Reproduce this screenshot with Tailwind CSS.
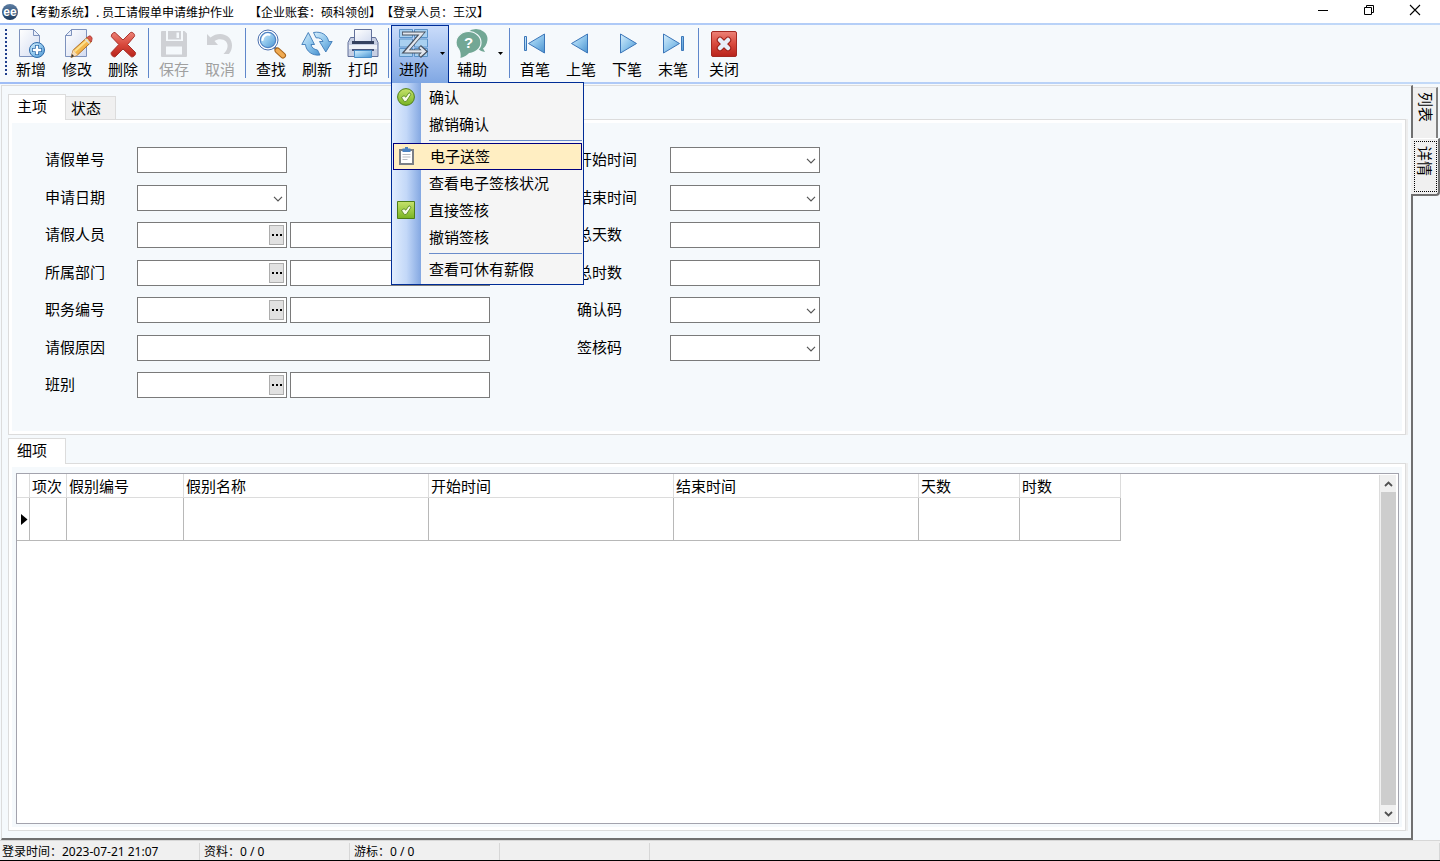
<!DOCTYPE html>
<html lang="zh-CN">
<head>
<meta charset="utf-8">
<title>员工请假单申请维护作业</title>
<script src="https://cdn.jsdelivr.net/npm/@tailwindcss/browser@4"></script>
</head>
<body class="flex h-screen min-h-[600px] flex-col overflow-hidden bg-[#f5f9fc] font-['Noto_Sans_CJK_SC',sans-serif] text-[15px] leading-[18px] text-black">

<!-- Shared gradients and glyphs -->
<svg width="0" height="0" class="absolute" aria-hidden="true">
  <defs>
    <linearGradient id="gBlue" x1="0" y1="0" x2="1" y2="1"><stop offset="0" stop-color="#d8effc"/><stop offset=".5" stop-color="#8fc6ec"/><stop offset="1" stop-color="#4a93d0"/></linearGradient>
    <linearGradient id="gPage" x1="0" y1="0" x2="1" y2="1"><stop offset="0" stop-color="#ffffff"/><stop offset="1" stop-color="#d3dcf0"/></linearGradient>
    <linearGradient id="gRed" x1="0" y1="0" x2="0" y2="1"><stop offset="0" stop-color="#ec8277"/><stop offset=".5" stop-color="#d8493c"/><stop offset="1" stop-color="#b8231b"/></linearGradient>
    <linearGradient id="gGreen" x1="0" y1="0" x2="0" y2="1"><stop offset="0" stop-color="#c6e26c"/><stop offset="1" stop-color="#78b422"/></linearGradient>
    <linearGradient id="gNavy" x1="0" y1="0" x2="0" y2="1"><stop offset="0" stop-color="#5d7ea3"/><stop offset="1" stop-color="#1d3c60"/></linearGradient>
    <symbol id="chev" viewBox="0 0 10 6"><path d="M1 .8 5 4.8 9 .8" fill="none" stroke="#555" stroke-width="1.2"/></symbol>
    <symbol id="drop" viewBox="0 0 5 3"><path d="M0 0h5L2.5 3z" fill="#000"/></symbol>
    <symbol id="dots" viewBox="0 0 10 2"><path d="M0 0h2v2H0zM4 0h2v2H4zM8 0h2v2H8z" fill="#000"/></symbol>
  </defs>
</svg>

<header class="flex h-[23px] shrink-0 items-center bg-white text-xs">
  <svg class="ml-0.5 size-4" viewBox="0 0 16 16" aria-hidden="true">
    <circle cx="8" cy="8" r="8" fill="url(#gNavy)"/>
    <text x="8" y="11.5" text-anchor="middle" font-family="Liberation Sans, sans-serif" font-weight="bold" font-size="12" fill="#fff">ee</text>
  </svg>
  <h1 class="ml-1.5 flex whitespace-nowrap [text-spacing-trim:space-all]"><span>【考勤系统】. 员工请假单申请维护作业</span><span class="ml-[15px]">【企业账套：硕科领创】【登录人员：王汉】</span></h1>
  <div class="ml-auto flex pr-0.5 pb-[3px]">
    <button type="button" aria-label="最小化" class="flex h-5 w-[46px] items-center justify-center"><svg width="12" height="12"><path d="M1 6.500h10" stroke="#000"/></svg></button>
    <button type="button" aria-label="还原" class="flex h-5 w-[45px] items-center justify-center"><svg width="12" height="12" fill="none" stroke="#000"><path d="M1.500 3.500h7v7h-7zM3.500 3.500v-2h7v7h-2"/></svg></button>
    <button type="button" aria-label="关闭窗口" class="flex h-5 w-[47px] items-center justify-center"><svg width="12" height="12"><path d="M1 1l10 10M11 1L1 11" stroke="#000" stroke-width="1.1"/></svg></button>
  </div>
</header>

<div class="h-0.5 shrink-0 bg-linear-to-r from-[#9fbdf6] to-[#c3daf8]"></div>
<nav class="relative z-10 flex h-[57px] shrink-0 whitespace-nowrap pl-[5px]" aria-label="工具栏">
  <div class="mt-1 mr-px h-12 w-0.5 bg-[repeating-linear-gradient(to_bottom,#1f3f8c_0_2px,transparent_2px_4px)]"></div>

  <button type="button" class="flex w-[46px] flex-col items-center pt-[3px]">
    <svg width="32" height="32" viewBox="0 0 32 32"><path d="M4.500 1.500h14l6 6v21h-20z" fill="url(#gPage)" stroke="#7d92bd"/><path d="M18.500 1.500v6h6z" fill="#e9effa" stroke="#7d92bd"/><circle cx="22" cy="22" r="7.500" fill="url(#gBlue)" stroke="#2f6cab"/><path d="M22 17v10M17 22h10" stroke="#2f6cab" stroke-width="4"/><path d="M22 17.800v8.400M17.800 22h8.400" stroke="#fff" stroke-width="2.400"/></svg>
    <span>新增</span></button>
  <button type="button" class="flex w-[46px] flex-col items-center pt-[3px]">
    <svg width="32" height="32" viewBox="0 0 32 32"><path d="M10.500 1.500h15v27h-21v-21z" fill="url(#gPage)" stroke="#7d92bd"/><path d="M10.500 1.500v6h-6z" fill="#e9effa" stroke="#7d92bd"/><path d="M10 29.500l2.200-7.500L26 9.500l4.300 4.500L16.500 27z" fill="#f3b64a" stroke="#a8651c" stroke-width=".9"/><path d="M13 22.500L26.500 10.500l1.500 1.300L14.500 24z" fill="#fbe08f"/><path d="M26 9.500l2-1.500c1.500-.8 3.800 1.800 3 3.500L30.300 14z" fill="#dd5a50" stroke="#a83a32" stroke-width=".8"/><path d="M24.300 11l4.300 4.500" stroke="#d9dde6" stroke-width="1.500"/><path d="M10 29.500l2.200-7.500 4.300 5z" fill="#f5dcb8"/><path d="M10 29.500l1-3.500 2.200 2.300z" fill="#333"/></svg>
    <span>修改</span></button>
  <button type="button" class="flex w-[46px] flex-col items-center pt-[3px]">
    <svg width="32" height="32" viewBox="0 0 32 32"><path d="M8 4.500l8 7.500 7.500-7.500c1.800-1 4.800 1.800 4 3.800L20.500 16.500l8 8c.6 2.200-2 5-4.200 4.300L16 21l-7.800 7.800c-2 .6-4.700-2-4-4.200l7.600-8.100-7.400-7.800C4 6.500 6 4.300 8 4.500z" fill="url(#gRed)" stroke="#a8322b"/></svg>
    <span>删除</span></button>
  <div class="mx-0.5 mt-[3px] h-[50px] w-px bg-[#5f87cb]"></div>

  <button type="button" disabled class="flex w-[46px] flex-col items-center pt-[3px] text-[#a0a0a0]">
    <svg width="32" height="32" viewBox="0 0 32 32"><path fill-rule="evenodd" d="M4 3h4v10h17V3h1.500L29 5.500V28a1 1 0 0 1-1 1H4a1 1 0 0 1-1-1V4a1 1 0 0 1 1-1zm4 15.500V26.500h16v-8z" fill="#cfd1d5"/><path fill-rule="evenodd" d="M10 3h13v8.500H10zm8.500 1.500V10h2.500V4.500z" fill="#cfd1d5"/></svg>
    <span>保存</span></button>
  <button type="button" disabled class="flex w-[46px] flex-col items-center pt-[3px] text-[#a0a0a0]">
    <svg width="32" height="32" viewBox="0 0 32 32"><path d="M3 6l3.500 3.500C12.500 4.500 20.500 5 25 9.500c4 4.500 4 11.500 0 16.500h-5.500c4-3.500 5.500-9 2.500-12.500-3-3-8-3-11.500-.5l3.500 4H3z" fill="#cfd1d5"/></svg>
    <span>取消</span></button>
  <div class="mx-0.5 mt-[3px] h-[50px] w-px bg-[#5f87cb]"></div>

  <button type="button" class="flex w-[46px] flex-col items-center pt-[3px]">
    <svg width="32" height="32" viewBox="0 0 32 32"><path d="M19 19l3.500 3.500" stroke="#6d7f9f" stroke-width="3"/><path d="M22.500 22.500l5.500 5" stroke="#a8651c" stroke-width="6" stroke-linecap="round"/><path d="M22.500 22.500l5.500 5" stroke="#f0ab52" stroke-width="4" stroke-linecap="round"/><circle cx="13" cy="12" r="10" fill="#fff" stroke="#4a6fae"/><circle cx="13" cy="12" r="7.700" fill="url(#gBlue)" stroke="#4f82c4" stroke-width="1.200"/><path d="M7.500 12a5.500 5.500 0 0 1 7-5.300" fill="none" stroke="#fff" stroke-width="2.200" stroke-linecap="round"/></svg>
    <span>查找</span></button>
  <button type="button" class="flex w-[46px] flex-col items-center pt-[3px]">
    <svg width="32" height="32" viewBox="0 0 32 32" fill="url(#gBlue)" stroke="#3d7ab8" stroke-width=".9"><path d="M7.300 4.500L.8 16.500h3.700c.5 6.500 6.500 11.500 14.500 10.500l-2.500-5c-3.500-.5-6-2.500-6.500-5.500h3.500z"/><path d="M24.800 24l6.400-10.500h-3.500C26.500 7 20.500 3 12.500 4.500l2.500 5.300c3.500-.3 6 1.200 7 3.700h-3.500z"/></svg>
    <span>刷新</span></button>
  <button type="button" class="flex w-[46px] flex-col items-center pt-[3px]">
    <svg width="32" height="32" viewBox="0 0 32 32"><path d="M3.500 9.500h25l2.500 5v14H1v-14z" fill="#c7cfe3" stroke="#62719b"/><path d="M7.500 1.500h17v12h-17z" fill="url(#gPage)" stroke="#62719b"/><path d="M5 13h22v3H5z" fill="#34415f"/><path d="M2 17h28v4H2z" fill="#eef1f8"/><path d="M5 21h22v2H5z" fill="#46557c"/><path d="M7.500 22.500h17v7h-17z" fill="url(#gBlue)" stroke="#4a8fc9"/></svg>
    <span>打印</span></button>
  <div class="mx-0.5 mt-[3px] h-[50px] w-px bg-[#5f87cb]"></div>

  <div class="relative w-[58px]">
    <button type="button" aria-haspopup="menu" aria-expanded="true" class="relative z-20 flex h-[58px] w-full border border-b-0 border-[#002d96] bg-linear-to-b from-[#cadcfa] to-[#80a7e3] pt-0.5">
      <span class="flex w-11 flex-col items-center">
        <svg width="32" height="32" viewBox="0 0 32 32"><path d="M1.500 1.500h13v8h-13zM16.500 1.500h13v8h-13zM1.500 11h13v8h-13zM16.500 11h13v8h-13zM1.500 20.500h13v8h-13zM16.500 20.500h13v8h-13z" fill="#a9d0f0" stroke="#5b93c8"/><path d="M4 5.500h19.500L8 23.500h17M21.500 18.500l5.500 5-5.500 5" fill="none" stroke="#46505f" stroke-width="4.200"/><path d="M4.800 5.500h19L8.500 23.300h17M22 19.300l4.600 4.200-4.600 4.200" fill="none" stroke="#e3e7ee" stroke-width="2.200"/></svg>
        <span>进阶</span></span>
      <svg class="mt-6 ml-1" width="5" height="3"><use href="#drop"/></svg>
    </button>
    <!-- Drop-down menu of the 进阶 button -->
    <div role="menu" class="absolute top-[57px] left-0 flex w-[193px] flex-col border border-[#002d96] bg-[#f5f5f5] bg-[linear-gradient(to_right,#e1edfd,#c3d8f8_50%,#84a8e2)] bg-[length:29px_100%] bg-no-repeat px-px py-px text-left">
      <button type="button" role="menuitem" class="flex h-[27px] items-center pb-0.5 pl-1"><svg class="mr-[14px]" width="18" height="18" viewBox="0 0 18 18"><circle cx="9" cy="9" r="8.400" fill="url(#gGreen)" stroke="#4d7d18"/><path d="M4.500 9.500l2.500-1.800 1.800 1.500 3.200-4.500 2 1.500-4.500 7-2 .5z" fill="#f7fbe8" stroke="#4d7d18" stroke-width=".8"/></svg>确认</button>
      <button type="button" role="menuitem" class="flex h-[27px] items-center pb-0.5 pl-9">撤销确认</button>
      <div role="separator" class="my-0.5 ml-9 h-px bg-[#6a8ccb]"></div>
      <button type="button" role="menuitem" class="flex h-[27px] items-center border border-[#000080] bg-[#ffeec2] pb-0.5 pl-1"><svg class="mr-[14px]" width="18" height="18" viewBox="0 0 18 18"><path d="M1 2h15v16H1z" fill="#7b7f86"/><path d="M3 4h11v12H3z" fill="#fff"/><path d="M4.500 1.500h2.500V0h3v1.500h2.500V5h-8z" fill="#4a82c2"/><path d="M4.500 7.500h8M4.500 10h8M4.500 12.500h5" stroke="#b7bbc2"/></svg>电子送签</button>
      <button type="button" role="menuitem" class="flex h-[27px] items-center pb-0.5 pl-9">查看电子签核状况</button>
      <button type="button" role="menuitem" class="flex h-[27px] items-center pb-0.5 pl-1"><svg class="mr-[14px]" width="18" height="18" viewBox="0 0 18 18"><path d="M.5.5h17v17H.5z" fill="url(#gGreen)" stroke="#4d7d18"/><path d="M4.500 9.500l2.500-1.800 1.800 1.500 3.200-4.500 2 1.500-4.500 7-2 .5z" fill="#f7fbe8" stroke="#4d7d18" stroke-width=".8"/></svg>直接签核</button>
      <button type="button" role="menuitem" class="flex h-[27px] items-center pb-0.5 pl-9">撤销签核</button>
      <div role="separator" class="my-0.5 ml-9 h-px bg-[#6a8ccb]"></div>
      <button type="button" role="menuitem" class="flex h-[27px] items-center pb-0.5 pl-9">查看可休有薪假</button>
    </div>
  </div>
  <button type="button" aria-haspopup="menu" class="flex w-[58px] pt-[3px]">
    <span class="flex w-[46px] flex-col items-center">
      <svg width="32" height="32" viewBox="0 0 32 32"><ellipse cx="20" cy="11" rx="11.500" ry="10" fill="#72a795"/><path d="M31 13c-.5 4-2 6-4 7.500l2 3.500c-3-.5-5-1.500-7-3z" fill="#72a795"/><ellipse cx="12.500" cy="14.500" rx="12.500" ry="11" fill="#72a795" stroke="#f5f9fc" stroke-width="1.200"/><path d="M3 20.500c1.500 3 2 6 1.500 9.500 4-1 7-3 9.500-6z" fill="#72a795"/><text x="12.500" y="20" text-anchor="middle" font-family="Liberation Sans, sans-serif" font-weight="bold" font-size="15" fill="#fff">?</text></svg>
      <span>辅助</span></span>
    <svg class="mt-6 ml-[3px]" width="5" height="3"><use href="#drop"/></svg>
  </button>
  <div class="mx-0.5 mt-[3px] h-[50px] w-px bg-[#5f87cb]"></div>

  <button type="button" class="flex w-[46px] flex-col items-center pt-[3px]">
    <svg width="32" height="32" viewBox="0 0 32 32" fill="url(#gBlue)" stroke="#3b76b9"><path d="M5.500 8.500h2v14h-2zM9.500 15.500l16-9.500v19z"/></svg>
    <span>首笔</span></button>
  <button type="button" class="flex w-[46px] flex-col items-center pt-[3px]">
    <svg width="32" height="32" viewBox="0 0 32 32" fill="url(#gBlue)" stroke="#3b76b9"><path d="M6.500 15.500l16-9.500v19z"/></svg>
    <span>上笔</span></button>
  <button type="button" class="flex w-[46px] flex-col items-center pt-[3px]">
    <svg width="32" height="32" viewBox="0 0 32 32" fill="url(#gBlue)" stroke="#3b76b9"><path d="M25.500 15.500L9.500 6v19z"/></svg>
    <span>下笔</span></button>
  <button type="button" class="flex w-[46px] flex-col items-center pt-[3px]">
    <svg width="32" height="32" viewBox="0 0 32 32" fill="url(#gBlue)" stroke="#3b76b9"><path d="M24.500 8.500h2v14h-2zM22.500 15.500L6.500 6v19z"/></svg>
    <span>末笔</span></button>
  <div class="mx-0.5 mt-[3px] h-[50px] w-px bg-[#5f87cb]"></div>
  <button type="button" class="flex w-[46px] flex-col items-center pt-[3px]">
    <svg width="32" height="32" viewBox="0 0 32 32"><rect x="3.500" y="3.500" width="25" height="25" rx="1.500" fill="url(#gRed)" stroke="#a32a22"/><path d="M12 12l8 8M20 12l-8 8" stroke="#9c2018" stroke-width="6.500" stroke-linecap="round"/><path d="M12 12l8 8M20 12l-8 8" stroke="#e8eef8" stroke-width="4.500" stroke-linecap="round"/></svg>
    <span>关闭</span></button>
</nav>
<div class="h-0.5 shrink-0 bg-linear-to-r from-[#9fbdf6] to-[#c3daf8]"></div>

<div class="flex min-h-0 flex-1 pt-px pl-px">
  <main class="flex min-w-0 flex-1 flex-col border-2 border-t border-l border-t-[#dcdcdc] border-r-[#707070] border-b-[#707070] border-l-[#dcdcdc] pt-2 pr-[5px] pb-[7px] pl-1.5">
    <div role="tablist" class="relative -mb-px flex items-end">
      <button type="button" role="tab" aria-selected="true" class="h-[26px] w-[58px] border border-b-0 border-[#dcdcdc] bg-white pb-[3px] pl-2 text-left">主项</button>
      <button type="button" role="tab" aria-selected="false" class="mb-px h-[23px] w-[50px] border border-b-0 border-l-0 border-[#dcdcdc] bg-[#f0f0f0] pl-[5px] text-left">状态</button>
    </div>
    <section class="border border-[#dcdcdc] bg-white p-[3px] shadow-[2px_0_0_#ededed]">
      <form class="flex bg-[#f5f9fc] pt-6 pb-[21px] pl-[33px]">
        <div class="grid h-[263px] w-[445px] shrink-0 grid-rows-7">
          <div class="flex"><label for="f1" class="w-[92px] pt-[3px]">请假单号</label><input id="f1" class="h-[26px] w-[150px] border border-[#7a7a7a] bg-white px-1"></div>
          <div class="flex"><label for="f2" class="w-[92px] pt-[3px]">申请日期</label><div class="relative h-[26px] w-[150px]"><select id="f2" class="h-full w-full appearance-none border border-[#7a7a7a] bg-white px-1"><option></option></select><svg class="pointer-events-none absolute top-[11px] right-1" width="10" height="6"><use href="#chev"/></svg></div></div>
          <div class="flex"><label for="f3" class="w-[92px] pt-[3px]">请假人员</label><div class="flex h-[26px] w-[150px] border border-[#7a7a7a] bg-white p-0.5"><input id="f3" class="min-w-0 flex-1"><button type="button" aria-label="选择请假人员" class="flex w-[15px] items-center justify-center border border-[#adadad] bg-[#e1e1e1]"><svg class="shrink-0" width="10" height="2"><use href="#dots"/></svg></button></div><input aria-label="请假人员名称" class="ml-[3px] h-[26px] w-[200px] border border-[#7a7a7a] bg-white px-1"></div>
          <div class="flex"><label for="f4" class="w-[92px] pt-[3px]">所属部门</label><div class="flex h-[26px] w-[150px] border border-[#7a7a7a] bg-white p-0.5"><input id="f4" class="min-w-0 flex-1"><button type="button" aria-label="选择所属部门" class="flex w-[15px] items-center justify-center border border-[#adadad] bg-[#e1e1e1]"><svg class="shrink-0" width="10" height="2"><use href="#dots"/></svg></button></div><input aria-label="所属部门名称" class="ml-[3px] h-[26px] w-[200px] border border-[#7a7a7a] bg-white px-1"></div>
          <div class="flex"><label for="f5" class="w-[92px] pt-[3px]">职务编号</label><div class="flex h-[26px] w-[150px] border border-[#7a7a7a] bg-white p-0.5"><input id="f5" class="min-w-0 flex-1"><button type="button" aria-label="选择职务编号" class="flex w-[15px] items-center justify-center border border-[#adadad] bg-[#e1e1e1]"><svg class="shrink-0" width="10" height="2"><use href="#dots"/></svg></button></div><input aria-label="职务名称" class="ml-[3px] h-[26px] w-[200px] border border-[#7a7a7a] bg-white px-1"></div>
          <div class="flex"><label for="f6" class="w-[92px] pt-[3px]">请假原因</label><input id="f6" class="h-[26px] w-[353px] border border-[#7a7a7a] bg-white px-1"></div>
          <div class="flex"><label for="f7" class="w-[92px] pt-[3px]">班别</label><div class="flex h-[26px] w-[150px] border border-[#7a7a7a] bg-white p-0.5"><input id="f7" class="min-w-0 flex-1"><button type="button" aria-label="选择班别" class="flex w-[15px] items-center justify-center border border-[#adadad] bg-[#e1e1e1]"><svg class="shrink-0" width="10" height="2"><use href="#dots"/></svg></button></div><input aria-label="班别名称" class="ml-[3px] h-[26px] w-[200px] border border-[#7a7a7a] bg-white px-1"></div>
        </div>
        <div class="ml-[87px] grid h-[263px] grid-rows-7">
          <div class="flex"><label for="r1" class="w-[93px] pt-[3px]">开始时间</label><div class="relative h-[26px] w-[150px]"><select id="r1" class="h-full w-full appearance-none border border-[#7a7a7a] bg-white px-1"><option></option></select><svg class="pointer-events-none absolute top-[11px] right-1" width="10" height="6"><use href="#chev"/></svg></div></div>
          <div class="flex"><label for="r2" class="w-[93px] pt-[3px]">结束时间</label><div class="relative h-[26px] w-[150px]"><select id="r2" class="h-full w-full appearance-none border border-[#7a7a7a] bg-white px-1"><option></option></select><svg class="pointer-events-none absolute top-[11px] right-1" width="10" height="6"><use href="#chev"/></svg></div></div>
          <div class="flex"><label for="r3" class="w-[93px] pt-[3px]">总天数</label><input id="r3" class="h-[26px] w-[150px] border border-[#7a7a7a] bg-white px-1"></div>
          <div class="flex"><label for="r4" class="w-[93px] pt-[3px]">总时数</label><input id="r4" class="h-[26px] w-[150px] border border-[#7a7a7a] bg-white px-1"></div>
          <div class="flex"><label for="r5" class="w-[93px] pt-[3px]">确认码</label><div class="relative h-[26px] w-[150px]"><select id="r5" class="h-full w-full appearance-none border border-[#7a7a7a] bg-white px-1"><option></option></select><svg class="pointer-events-none absolute top-[11px] right-1" width="10" height="6"><use href="#chev"/></svg></div></div>
          <div class="flex"><label for="r6" class="w-[93px] pt-[3px]">签核码</label><div class="relative h-[26px] w-[150px]"><select id="r6" class="h-full w-full appearance-none border border-[#7a7a7a] bg-white px-1"><option></option></select><svg class="pointer-events-none absolute top-[11px] right-1" width="10" height="6"><use href="#chev"/></svg></div></div>
        </div>
      </form>
    </section>

    <div role="tablist" class="relative mt-[3px] -mb-px flex">
      <button type="button" role="tab" aria-selected="true" class="h-[26px] w-[58px] border border-b-0 border-[#dcdcdc] bg-white pb-[3px] pl-2 text-left">细项</button>
    </div>
    <section class="flex min-h-0 flex-1 border border-[#dcdcdc] bg-white p-[3px] shadow-[2px_0_0_#ededed]">
      <div class="flex min-w-0 flex-1 bg-[#f5f9fc] pt-1.5 pr-[3px] pb-[3px] pl-1">
        <div class="flex min-w-0 flex-1 border border-[#a3a3ad] bg-white">
          <div class="min-w-0 flex-1 overflow-hidden">
            <table class="w-[1104px] table-fixed border-separate border-spacing-0 text-left">
              <colgroup><col class="w-[13px]"><col class="w-[37px]"><col class="w-[117px]"><col class="w-[245px]"><col class="w-[245px]"><col class="w-[245px]"><col class="w-[101px]"><col class="w-[101px]"></colgroup>
              <thead>
                <tr class="h-6 *:border-r *:border-b *:border-[#dcdcdc] *:p-0 *:pl-0.5 *:font-normal">
                  <td></td><th scope="col">项次</th><th scope="col">假别编号</th><th scope="col">假别名称</th><th scope="col">开始时间</th><th scope="col">结束时间</th><th scope="col">天数</th><th scope="col">时数</th>
                </tr>
              </thead>
              <tbody>
                <tr class="h-[43px] *:border-r *:border-b *:border-[#b8b8b8] *:p-0">
                  <td><svg class="ml-1" width="7" height="11"><path d="M0 0l6.500 5.500L0 11z"/></svg></td><td></td><td></td><td></td><td></td><td></td><td></td><td></td>
                </tr>
              </tbody>
            </table>
          </div>
          <div class="my-px mr-0.5 flex w-[17px] flex-col border-l border-[#dcdcdc] bg-[#f0f0f0] pl-px">
            <button type="button" aria-label="向上滚动" class="flex h-[17px] items-center justify-center"><svg width="9" height="6"><path d="M1 5l3.500-3.500L8 5" fill="none" stroke="#505050" stroke-width="1.800"/></svg></button>
            <div class="flex-1 bg-[#cdcdcd]"></div>
            <button type="button" aria-label="向下滚动" class="flex h-[17px] items-center justify-center"><svg width="9" height="6"><path d="M1 1l3.500 3.500L8 1" fill="none" stroke="#505050" stroke-width="1.800"/></svg></button>
          </div>
        </div>
      </div>
    </section>
  </main>

  <aside role="tablist" aria-label="视图" class="flex w-[27px] flex-col pt-0.5">
    <button type="button" role="tab" aria-selected="false" class="flex h-[51px] w-[25px] items-center border-t border-r-2 border-t-[#dcdcdc] border-r-[#808080] bg-[#f0f0f0] pt-1 pl-[3px] [text-orientation:sideways] [writing-mode:vertical-rl]">列表</button>
    <button type="button" role="tab" aria-selected="true" class="relative -ml-0.5 flex h-[58px] w-[29px] rounded-br-sm border-t border-r-2 border-b-2 border-t-white border-r-[#707070] border-b-[#707070] bg-[#f0f0f0] pt-0.5 pr-px pb-0.5 pl-[3px]"><span class="flex h-full w-full border border-dotted border-black pt-1 pr-0.5 leading-[18px] [text-orientation:sideways] [writing-mode:vertical-rl]">详情</span></button>
  </aside>
</div>

<footer class="flex h-[21px] shrink-0 border-t border-b border-t-[#d7d7d7] border-b-black bg-[#f0f0f0] pt-0.5 font-['Noto_Sans','Noto_Sans_CJK_SC',sans-serif] text-xs leading-[18px]">
  <div class="w-[200px] border-r border-[#d7d7d7] pl-0.5">登录时间：2023-07-21 21:07</div>
  <div class="w-[150px] border-r border-[#d7d7d7] pl-1">资料：0 / 0</div>
  <div class="w-[150px] border-r border-[#d7d7d7] pl-1">游标：0 / 0</div>
  <div class="w-[150px] border-r border-[#d7d7d7]"></div>
  <div class="flex-1 border-r border-[#d7d7d7]"></div>
</footer>
</body>
</html>
